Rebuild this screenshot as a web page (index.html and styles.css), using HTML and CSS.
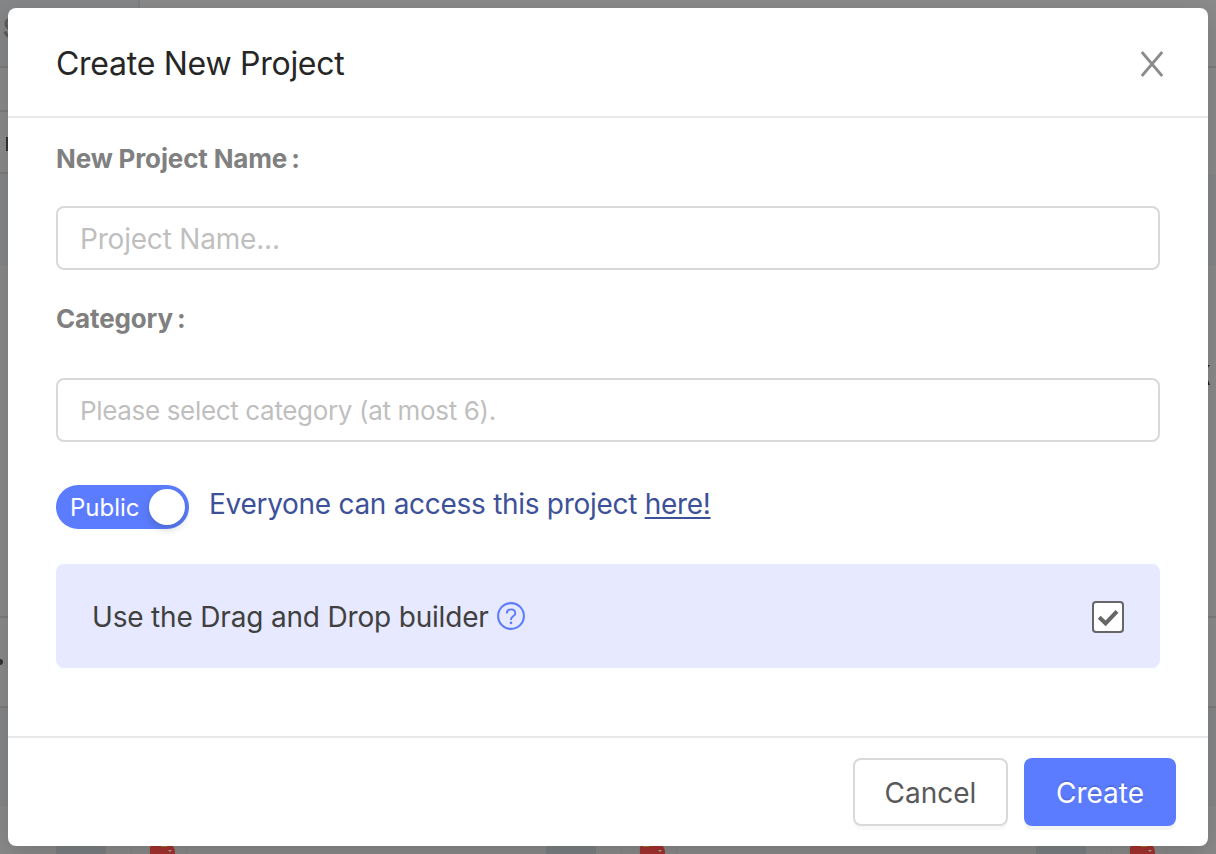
FILE: index.html
```html
<!DOCTYPE html>
<html lang="en">
<head>
<meta charset="utf-8">
<title>Create New Project</title>
<link rel="stylesheet" href="styles.css">
</head>
<body>
<svg class="backdrop" width="1216" height="854" viewBox="0 0 1216 854" aria-hidden="true">
  <rect width="1216" height="854" fill="#8a8a8a"/>
  <path d="M0 0h139v67H0zM0 174h1216v92H0zM0 708h1216v98H0z" fill="#848688"/>
  <path d="M0 67h1216M0 111h8M0 173h8M0 617h8M1208 617h8M0 707h8M1208 707h8" stroke="#7c7c7c" stroke-width="2"/>
  <path d="M139 0v8" stroke="#7e7e7e" stroke-width="2"/>
  <path d="M10 19Q6 20 6 24Q6 27 10 29M5 31.500Q6 35 10 37" fill="none" stroke="#5c5c5c" stroke-width="3"/>
  <path d="M6 137h3v14H6z" fill="#333"/>
  <circle cx="0" cy="662" r="3" fill="#333"/>
  <path d="M1206 365h4l-3 4zM1206 385h4l-2-5z" fill="#222"/>
  <path d="M56 840h50v14H56zM546 840h50v14h-50zM1036 840h50v14h-50z" fill="#7d8082"/>
  <g fill="none" stroke="#8a8478">
    <path d="M130 846l2 8M188 846l-2 8M620 846l2 8M678 846l-2 8M1110 846l2 8M1168 846l-2 8"/>
  </g>
  <g>
    <path d="M150 854q-1-9 3-11h15q8 3 7 11z" fill="#a4322e"/>
    <path d="M640 854q-1-9 3-11h15q8 3 7 11z" fill="#a4322e"/>
    <path d="M1130 854q-1-9 3-11h15q8 3 7 11z" fill="#a4322e"/>
    <path d="M168 850l2 2 2-2zM650 850h0M658 850l2 2 2-2zM1148 850l2 2 2-2z" fill="#aaa"/>
    <path d="M161 846h6M643 846h6M1141 846h6" stroke="#94802b" stroke-width="2"/>
  </g>
</svg>
<section class="modal" role="dialog" aria-labelledby="dialog-title">
  <header class="modal-header">
    <h1 class="modal-title" id="dialog-title">Create New Project</h1>
    <button class="close" type="button" aria-label="Close">
      <svg width="24" height="26" viewBox="0 0 24 26"><path d="M1.8 1L22.2 25M22.2 1L1.8 25" stroke="#8c8c8c" stroke-width="2.8" fill="none"/></svg>
    </button>
  </header>
  <div class="modal-body">
    <div class="label label-name"><span>New Project Name</span><span class="colon">:</span></div>
    <div class="field field-name"><span>Project Name...</span></div>
    <div class="label label-category"><span>Category</span><span class="colon">:</span></div>
    <div class="field field-category"><span>Please select category (at most 6).</span></div>
    <div class="visibility">
      <button class="switch" type="button" role="switch" aria-checked="true"><span class="switch-text">Public</span><span class="knob"></span></button>
      <p class="access">Everyone can access this project <a class="link">here!</a></p>
    </div>
    <div class="builder">
      <span class="builder-text">Use the Drag and Drop builder</span>
      <svg class="help" width="28" height="28" viewBox="0 0 28 28" fill="none"><circle cx="14" cy="14" r="12.9" stroke="#5c7cff" stroke-width="2.1"/><path d="M9.800 11.500C9.800 8.900 11.600 7.400 14 7.400S18.300 8.900 18.300 11.200C18.300 14.300 14 14.100 14 17.300V18" stroke="#5c7cff" stroke-width="1.9"/><circle cx="14" cy="20.900" r="1.300" fill="#5c7cff"/></svg>
      <svg class="check" width="32" height="32" viewBox="0 0 32 32" fill="none"><rect x="1" y="1" width="30" height="30" rx="3" fill="#fff" stroke="#666" stroke-width="2"/><path d="M7.200 16.200L13.600 22.300L25 10.300" stroke="#666" stroke-width="4"/></svg>
    </div>
  </div>
  <footer class="modal-footer">
    <button class="btn btn-cancel" type="button">Cancel</button>
    <button class="btn btn-create" type="button">Create</button>
  </footer>
</section>
</body>
</html>
```
FILE: styles.css
```css
* { box-sizing: border-box; }
body {
  margin: 0;
  padding: 8px;
  height: 854px;
  overflow: hidden;
  background: #858585;
  font-family: Inter, "Liberation Sans", sans-serif;
}
.backdrop { position: absolute; left: 0; top: 0; z-index: -1; }
button { font-family: inherit; margin: 0; padding: 0; border: 0; background: none; white-space: nowrap; }
.modal {
  display: flex;
  flex-direction: column;
  height: 838px;
  border-radius: 8px;
  background: #fff;
  box-shadow: 0 8px 24px rgba(0, 0, 0, .15);
}
.modal-header {
  display: flex;
  justify-content: space-between;
  align-items: center;
  height: 110px;
  padding: 2px 44px 0 48px;
  border-bottom: 2px solid #e8e8e8;
}
.modal-title { margin: 0; padding-top: 1px; font-size: 32px; font-weight: 400; line-height: 44px; color: #262626; letter-spacing: -.27px; }
.close { display: flex; padding-top: 2px; }
.modal-body { display: flex; flex-direction: column; flex: 1; padding: 22px 48px 0; }
.label { display: flex; gap: 4px; height: 38px; line-height: 38px; font-size: 26px; font-weight: 700; letter-spacing: -.15px; color: #808080; }
.label-category { margin-top: 30px; }
.field { display: flex; align-items: center; height: 64px; padding: 2px 22px 0; border: 2px solid #d9d9d9; border-radius: 8px; color: #bfbfbf; }
.field-name { margin-top: 28px; font-size: 28px; letter-spacing: -.2px; }
.field-category { margin-top: 40px; padding-top: 0; font-size: 26px; letter-spacing: -.34px; }
.visibility { display: flex; gap: 20px; margin-top: 43px; height: 44px; }
.switch { display: flex; align-items: center; justify-content: space-between; width: 133px; height: 44px; padding: 0 4px 0 14px; border-radius: 22px; background: #5c7cff; color: #fff; font-size: 24px; }
.knob { width: 36px; height: 36px; border-radius: 50%; background: #fff; box-shadow: 0 4px 8px rgba(0, 35, 11, .2); }
.access { margin: 0; font-size: 28px; line-height: 38px; letter-spacing: -.29px; color: #3d5199; white-space: nowrap; }
.link { text-decoration: underline; text-decoration-thickness: 2px; text-underline-offset: 3px; }
.builder { display: flex; align-items: center; height: 104px; margin-top: 35px; padding: 2px 36px 0; border-radius: 8px; background: #e6e9ff; color: #404040; font-size: 28px; letter-spacing: -.18px; white-space: nowrap; }
.help { margin: 0 0 2px 8px; }
.check { margin-left: auto; }
.modal-footer { display: flex; justify-content: flex-end; gap: 16px; height: 110px; padding: 20px 32px 0; border-top: 2px solid #e8e8e8; }
.btn { height: 68px; padding-top: 2px; border-radius: 8px; font-size: 28px; box-shadow: 0 4px 0 rgba(0, 0, 0, .025); }
.btn-cancel { width: 155px; border: 2px solid #d9d9d9; background: #fff; color: #595959; }
.btn-create { width: 152px; background: #5c7cff; color: #fff; text-shadow: 0 -2px 0 rgba(0, 0, 0, .12); box-shadow: 0 4px 0 rgba(0, 0, 0, .045); }
```
